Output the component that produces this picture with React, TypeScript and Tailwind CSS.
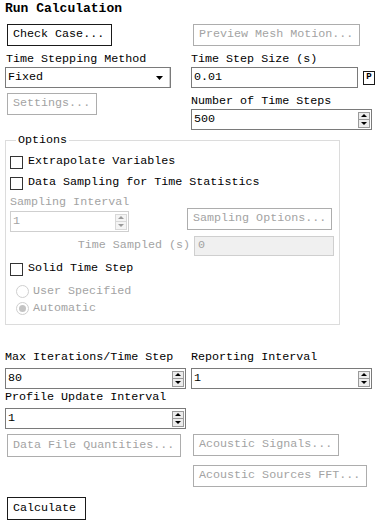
import React from 'react'

const font = { fontFamily: '"Liberation Mono", "DejaVu Sans Mono", monospace' }

function Btn({ label, disabled, className = '' }: { label: string; disabled?: boolean; className?: string }) {
  return (
    <div
      className={`h-[22px] flex items-center px-[5px] border leading-none whitespace-nowrap ${
        disabled ? 'border-[#adadad] text-[#a3a3a3]' : 'border-[#1a1a1a] text-black'
      } ${className}`}
    >
      {label}
    </div>
  )
}

function Spin({ value, disabled, className = '' }: { value: string; disabled?: boolean; className?: string }) {
  return (
    <div
      className={`h-[21px] flex items-center border ${
        disabled ? 'border-[#cfcfcf] text-[#a3a3a3]' : 'border-[#7a7a7a] text-black'
      } ${className}`}
    >
      <span className="flex-1 pl-[2px] leading-none">{value}</span>
      <div
        className={`w-[12px] h-[16px] mr-[1px] flex flex-col border ${
          disabled ? 'border-[#d8d8d8] bg-[#f4f4f4]' : 'border-[#9a9a9a] bg-[#ececec]'
        }`}
      >
        <div className="flex-1 flex items-center justify-center">
          <svg width="6" height="3" viewBox="0 0 6 3">
            <path d="M0 3 L3 0 L6 3 Z" fill={disabled ? '#9a9a9a' : '#000'} />
          </svg>
        </div>
        <div className={`h-px ${disabled ? 'bg-[#d8d8d8]' : 'bg-[#9a9a9a]'}`} />
        <div className="flex-1 flex items-center justify-center">
          <svg width="6" height="3" viewBox="0 0 6 3">
            <path d="M0 0 L6 0 L3 3 Z" fill={disabled ? '#9a9a9a' : '#000'} />
          </svg>
        </div>
      </div>
    </div>
  )
}

function Check({ label }: { label: string }) {
  return (
    <div className="flex items-center h-[12px]">
      <div className="w-[13px] h-[13px] border border-[#333] bg-white" />
      <span className="ml-[5px] leading-none">{label}</span>
    </div>
  )
}

function Radio({ label, checked }: { label: string; checked?: boolean }) {
  return (
    <div className="flex items-center h-[13px] text-[#a3a3a3]">
      <div className="w-[13px] h-[13px] rounded-full border border-[#cfcfcf] bg-white flex items-center justify-center">
        {checked && <div className="w-[7px] h-[7px] rounded-full bg-[#c4c4c4]" />}
      </div>
      <span className="ml-[4px] leading-none">{label}</span>
    </div>
  )
}

export default function App() {
  return (
    <div className="w-[387px] h-[527px] bg-white text-[11.7px] text-black overflow-hidden" style={font}>
      <div className="pl-[5px] pt-[2px] h-[22px] text-[13px] font-bold leading-[14px]">Run Calculation</div>

      <div className="flex mt-[2px]">
        <Btn label="Check Case..." className="ml-[7px] w-[105px]" />
        <Btn label="Preview Mesh Motion..." disabled className="ml-[81px] w-[167px]" />
      </div>

      <div className="flex mt-[6px]">
        <div className="w-[186px] pl-[6px] flex flex-col">
          <div className="h-[14px] leading-[14px]">Time Stepping Method</div>
          <div className="mt-[1px] h-[21px] w-[166px] border border-[#7a7a7a] flex items-center -ml-px">
            <span className="flex-1 pl-[2px] leading-none">Fixed</span>
            <svg width="7" height="4" viewBox="0 0 7 4" className="mr-[6px]">
              <path d="M0 0 L7 0 L3.5 4 Z" fill="#000" />
            </svg>
            <div className="w-px h-full bg-[#d0d0d0]" />
          </div>
          <Btn label="Settings..." disabled className="mt-[5px] ml-px w-[90px]" />
        </div>
        <div className="flex flex-col pl-[5px]">
          <div className="h-[14px] leading-[14px]">Time Step Size (s)</div>
          <div className="flex items-center mt-[1px]">
            <div className="w-[167px] h-[21px] border border-[#7a7a7a] flex items-center">
              <span className="pl-[2px] leading-none">0.01</span>
            </div>
            <div className="ml-[5px] w-[12px] h-[14px] border border-[#1a1a1a] text-[9px] font-bold flex items-center justify-center leading-none">
              P
            </div>
          </div>
          <div className="h-[14px] leading-[14px] mt-[6px]">Number of Time Steps</div>
          <Spin value="500" className="mt-[1px] w-[181px]" />
        </div>
      </div>

      <div className="relative ml-[5px] mt-[10px] w-[335px] h-[185px] border border-[#dcdcdc]">
        <div className="absolute left-[10px] -top-[8px] px-[2px] bg-white leading-[14px]">Options</div>
        <div className="flex flex-col pl-[4px] pt-[15px]">
          <Check label="Extrapolate Variables" />
          <div className="mt-[9px]">
            <Check label="Data Sampling for Time Statistics" />
          </div>
          <div className="mt-[6px] h-[14px] leading-[14px] text-[#a3a3a3]">Sampling Interval</div>
          <div className="flex items-start mt-[2px]">
            <Spin value="1" disabled className="w-[119px]" />
            <Btn label="Sampling Options..." disabled className="ml-[58px] -mt-[3px] w-[145px]" />
          </div>
          <div className="flex items-center mt-[4px]">
            <span className="w-[180px] text-right text-[#a3a3a3] leading-none">Time Sampled (s)</span>
            <div className="ml-[4px] w-[140px] h-[20px] border border-[#cfcfcf] bg-[#f0f0f0] flex items-center text-[#a3a3a3]">
              <span className="pl-[3px] leading-none">0</span>
            </div>
          </div>
          <div className="mt-[7px]">
            <Check label="Solid Time Step" />
          </div>
          <div className="flex flex-col pl-[6px] mt-[10px] gap-[4px]">
            <Radio label="User Specified" />
            <Radio label="Automatic" checked />
          </div>
        </div>
      </div>

      <div className="flex mt-[25px]">
        <div className="w-[186px] pl-[5px] flex flex-col">
          <div className="h-[14px] leading-[14px]">Max Iterations/Time Step</div>
          <Spin value="80" className="mt-[4px] w-[181px]" />
          <div className="h-[14px] leading-[14px] mt-[1px]">Profile Update Interval</div>
          <Spin value="1" className="mt-[4px] w-[181px]" />
          <Btn label="Data File Quantities..." disabled className="mt-[5px] ml-[2px] w-[174px] h-[23px]" />
        </div>
        <div className="flex flex-col pl-[5px]">
          <div className="h-[14px] leading-[14px]">Reporting Interval</div>
          <Spin value="1" className="mt-[4px] w-[181px]" />
          <Btn label="Acoustic Signals..." disabled className="mt-[45px] ml-[2px] w-[146px]" />
          <Btn label="Acoustic Sources FFT..." disabled className="mt-[9px] ml-[2px] w-[174px]" />
        </div>
      </div>

      <Btn label="Calculate" className="mt-[10px] ml-[7px] w-[79px] h-[23px]" />
    </div>
  )
}
